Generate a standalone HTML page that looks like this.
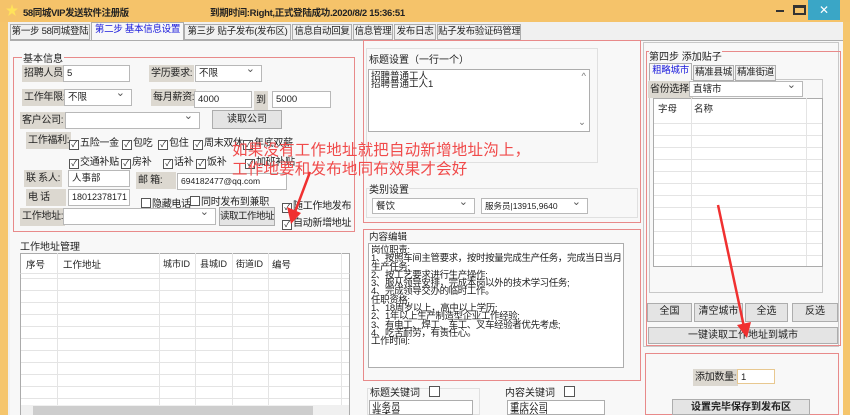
<!DOCTYPE html>
<html><head><meta charset="utf-8"><style>
*{box-sizing:border-box;margin:0;padding:0}
body{width:850px;height:415px;overflow:hidden;background:#f5c56c;font-family:"Liberation Sans","Noto Sans CJK SC",sans-serif;font-size:10px;color:#222;position:relative}
div,span{white-space:nowrap}
.a{position:absolute}
.red{position:absolute;border:1px solid #e88a8a}
.in{position:absolute;background:#fff;border:1px solid #b8b8b8;font-size:9.5px;padding:1px 3px;line-height:13px;overflow:hidden}
.lb{position:absolute;background:#dcd8d0;padding:0 2px;line-height:17px;height:17px;font-size:10px;letter-spacing:-0.3px}
.sel:after{content:"⌄";position:absolute;right:6px;top:-3px;font-size:11px;color:#555}
.btn{position:absolute;background:#e4e4e4;border:1px solid #adadad;text-align:center;line-height:16px;font-size:10px;overflow:hidden}
.cb{display:inline-block;width:10px;height:10px;border:1px solid #555;background:#fff;font-size:8px;line-height:8px;text-align:center;margin-right:1px;vertical-align:-1px}
.tab{position:absolute;top:24px;height:16px;border:1px solid #adadad;background:#f0f0f0;line-height:14px;font-size:9.5px;text-align:center;overflow:hidden;letter-spacing:-0.3px}
.grid{position:absolute;background:#fff;border:1px solid #ababab;background-image:linear-gradient(#e4e4e4 1px,transparent 1px);background-size:100% 12px}
.ta{position:absolute;background:#fff;border:1px solid #adadad;font-size:9.5px;line-height:8.3px;padding:3px 2px;overflow:hidden}
.ck{position:absolute;font-size:10px;letter-spacing:-0.3px}
</style></head><body>
<div class="a" style="left:0;top:0;width:850px;height:22px;background:#f5c36a"></div>
<div class="a" style="left:6px;top:4px;width:12px;height:12px;background:#ffe25a;clip-path:polygon(50% 0,62% 38%,100% 38%,70% 62%,82% 100%,50% 76%,18% 100%,30% 62%,0 38%,38% 38%)"></div>
<div class="a" style="left:23px;top:5px;font-weight:bold;font-size:9.5px;letter-spacing:-0.4px">58同城VIP发送软件注册版</div>
<div class="a" style="left:210px;top:5px;font-weight:bold;font-size:9.5px;letter-spacing:-0.3px">到期时间:Right,正式登陆成功.2020/8/2 15:36:51</div>
<div class="a" style="left:776px;top:10px;width:8px;height:2px;background:#333"></div>
<div class="a" style="left:793px;top:5px;width:13px;height:10px;border:2px solid #333;border-top-width:3px;background:#f5c36a"></div>
<div class="a" style="left:808px;top:0;width:32px;height:20px;background:#3aa6c6;color:#fff;text-align:center;line-height:20px;font-size:12px">✕</div>
<div class="a" style="left:8px;top:22px;width:835px;height:393px;background:#f0f0f0"></div>
<div class="tab" style="left:10px;width:80px">第一步 58同城登陆</div>
<div class="tab" style="left:91px;width:93px;top:22px;height:19px;background:#f8f8f8;border-bottom:none;color:#1a1adc">第二步 基本信息设置</div>
<div class="tab" style="left:184px;width:107px">第三步 贴子发布(发布区)</div>
<div class="tab" style="left:292px;width:60px">信息自动回复</div>
<div class="tab" style="left:353px;width:40px">信息管理</div>
<div class="tab" style="left:394px;width:42px">发布日志</div>
<div class="tab" style="left:437px;width:84px">贴子发布验证码管理</div>
<div class="a" style="left:10px;top:40px;width:833px;height:375px;border-top:1px solid #adadad;background:#f8f8f8"></div>
<!-- left group -->
<div class="red" style="left:13px;top:57px;width:342px;height:175px"></div>
<div class="a" style="left:22px;top:50px;background:#f8f8f8;padding:0 1px">基本信息</div>
<div class="lb" style="left:22px;top:65px">招聘人员:</div><div class="in" style="left:63px;top:65px;width:67px;height:17px">5</div>
<div class="lb" style="left:149px;top:65px">学历要求:</div><div class="in sel" style="left:195px;top:65px;width:67px;height:17px">不限</div>
<div class="lb" style="left:22px;top:89px">工作年限:</div><div class="in sel" style="left:64px;top:89px;width:68px;height:17px">不限</div>
<div class="lb" style="left:151px;top:89px">每月薪资:</div><div class="in" style="left:194px;top:91px;width:58px;height:17px">4000</div>
<div class="lb" style="left:254px;top:91px;height:20px;line-height:20px">到</div><div class="in" style="left:272px;top:91px;width:59px;height:17px">5000</div>
<div class="lb" style="left:20px;top:112px">客户公司:</div><div class="in sel" style="left:65px;top:112px;width:135px;height:17px"></div>
<div class="btn" style="left:212px;top:110px;width:70px;height:19px;line-height:17px">读取公司</div>
<div class="lb" style="left:26px;top:132px">工作福利:</div>
<div class="ck" style="left:69px;top:134px"><span class="cb">✓</span>五险一金</div>
<div class="ck" style="left:122px;top:134px"><span class="cb">✓</span>包吃</div>
<div class="ck" style="left:158px;top:134px"><span class="cb">✓</span>包住</div>
<div class="ck" style="left:193px;top:134px"><span class="cb">✓</span>周末双休</div>
<div class="ck" style="left:243px;top:134px"><span class="cb">✓</span>年底双薪</div>
<div class="ck" style="left:69px;top:153px"><span class="cb">✓</span>交通补贴</div>
<div class="ck" style="left:121px;top:153px"><span class="cb">✓</span>房补</div>
<div class="ck" style="left:163px;top:153px"><span class="cb">✓</span>话补</div>
<div class="ck" style="left:196px;top:153px"><span class="cb">✓</span>饭补</div>
<div class="ck" style="left:245px;top:153px"><span class="cb">✓</span>加班补贴</div>
<div class="lb" style="left:24px;top:170px">联 系人:</div><div class="in" style="left:68px;top:170px;width:62px;height:17px">人事部</div>
<div class="lb" style="left:136px;top:172px;width:40px">邮 箱:</div><div class="in" style="left:177px;top:173px;width:110px;height:17px;font-size:8.5px">694182477@qq.com</div>
<div class="lb" style="left:26px;top:189px;width:40px">电 话</div><div class="in" style="left:68px;top:189px;width:62px;height:17px;font-size:9px">18012378171</div>
<div class="ck" style="left:141px;top:195px"><span class="cb"></span>隐藏电话</div>
<div class="ck" style="left:190px;top:193px"><span class="cb"></span>同时发布到兼职</div>
<div class="ck" style="left:282px;top:197px"><span class="cb">✓</span>随工作地发布</div>
<div class="lb" style="left:20px;top:208px;height:18px">工作地址:</div><div class="in sel" style="left:63px;top:208px;width:153px;height:17px"></div>
<div class="btn" style="left:219px;top:207px;width:56px;height:19px;line-height:17px;font-size:9.5px;letter-spacing:-0.5px">读取工作地址</div>
<div class="ck" style="left:282px;top:214px"><span class="cb">✓</span>自动新增地址</div>
<!-- address grid -->
<div class="a" style="left:20px;top:238px">工作地址管理</div>
<div class="grid" style="left:20px;top:253px;width:330px;height:162px"></div>
<div class="a" style="left:20px;top:253px;width:330px;height:21px;background:#fff;border:1px solid #ababab;border-bottom:1px solid #e4e4e4"></div>
<div class="a" style="left:26px;top:257px;font-size:9.5px">序号</div><div class="a" style="left:63px;top:257px;font-size:9.5px">工作地址</div>
<div class="a" style="left:163px;top:257px;font-size:9px">城市ID</div><div class="a" style="left:200px;top:257px;font-size:9px">县城ID</div>
<div class="a" style="left:236px;top:257px;font-size:9px">街道ID</div><div class="a" style="left:272px;top:257px;font-size:9.5px">编号</div>
<div class="a" style="left:57px;top:253px;width:1px;height:152px;background:#e4e4e4"></div>
<div class="a" style="left:159px;top:253px;width:1px;height:152px;background:#e4e4e4"></div>
<div class="a" style="left:195px;top:253px;width:1px;height:152px;background:#e4e4e4"></div>
<div class="a" style="left:232px;top:253px;width:1px;height:152px;background:#e4e4e4"></div>
<div class="a" style="left:268px;top:253px;width:1px;height:152px;background:#e4e4e4"></div>
<div class="a" style="left:341px;top:253px;width:1px;height:152px;background:#e4e4e4"></div>
<div class="a" style="left:21px;top:405px;width:328px;height:10px;background:#f0f0f0"></div>
<div class="a" style="left:33px;top:406px;width:280px;height:9px;background:#cdcdcd"></div>
<!-- middle -->
<div class="red" style="left:363px;top:40px;width:278px;height:183px"></div>
<div class="a" style="left:366px;top:48px;width:232px;height:115px;border:1px solid #e0e0e0"></div>
<div class="a" style="left:369px;top:51px">标题设置（一行一个）</div>
<div class="ta" style="left:368px;top:69px;width:222px;height:63px">招聘普通工人<br>招聘普通工人1<span style="position:absolute;right:3px;top:2px;color:#777;line-height:10px">^</span><span style="position:absolute;right:3px;bottom:3px;color:#777;line-height:10px">⌄</span></div>
<div class="a" style="left:366px;top:188px;width:272px;height:30px;border:1px solid #e0e0e0"></div>
<div class="a" style="left:369px;top:181px;background:#f8f8f8">类别设置</div>
<div class="in sel" style="left:372px;top:198px;width:103px;height:16px">餐饮</div>
<div class="in sel" style="left:481px;top:198px;width:107px;height:16px;font-size:8.5px">服务员|13915,9640</div>
<div class="red" style="left:363px;top:229px;width:278px;height:152px"></div>
<div class="a" style="left:369px;top:229px;font-size:9.5px">内容编辑</div>
<div class="ta" style="left:368px;top:243px;width:256px;height:125px;letter-spacing:-0.4px">岗位职责:<br>1、按照车间主管要求，按时按量完成生产任务，完成当日当月<br>生产任务;<br>2、按工艺要求进行生产操作;<br>3、服从领导安排，完成本岗以外的技术学习任务;<br>4、完成领导交办的临时工作。<br>任职资格:<br>1、18周岁以上，高中以上学历;<br>2、1年以上生产制造型企业工作经验;<br>3、有电工、焊工、车工、叉车经验者优先考虑;<br>4、吃苦耐劳，有责任心。<br>工作时间:</div>
<div class="a" style="left:367px;top:388px;width:113px;height:27px;border:1px solid #e0e0e0"></div>
<div class="a" style="left:370px;top:384px">标题关键词 <span class="cb" style="width:11px;height:11px;margin-left:6px"></span></div>
<div class="ta" style="left:369px;top:400px;width:104px;height:15px">业务员<br>技术员</div>
<div class="a" style="left:505px;top:384px">内容关键词 <span class="cb" style="width:11px;height:11px;margin-left:6px"></span></div>
<div class="ta" style="left:507px;top:400px;width:98px;height:15px">重庆公司<br>贵阳公司</div>
<!-- right -->
<div class="a" style="left:643px;top:42px;width:196px;height:305px;border:1px solid #c8c8c8"></div>
<div class="red" style="left:646px;top:51px;width:195px;height:295px"></div>
<div class="a" style="left:649px;top:48px;background:#f8f8f8">第四步 添加贴子</div>
<div class="a" style="left:649px;top:79px;width:174px;height:214px;border:1px solid #c8c8c8"></div>
<div class="tab" style="left:649px;width:43px;top:63px;height:17px;background:#f8f8f8;border-bottom:none;color:#1a1adc">粗略城市</div>
<div class="tab" style="left:693px;width:41px;top:65px">精准县城</div>
<div class="tab" style="left:735px;width:41px;top:65px">精准街道</div>
<div class="lb" style="left:648px;top:81px">省份选择:</div>
<div class="in sel" style="left:689px;top:81px;width:114px;height:16px">直辖市</div>
<div class="grid" style="left:653px;top:98px;width:170px;height:169px"></div>
<div class="a" style="left:654px;top:99px;width:168px;height:16px;background:#fff"></div>
<div class="a" style="left:658px;top:101px;font-size:9.5px">字母</div><div class="a" style="left:694px;top:101px;font-size:9.5px">名称</div>
<div class="a" style="left:691px;top:98px;width:1px;height:168px;background:#e4e4e4"></div>
<div class="a" style="left:806px;top:98px;width:1px;height:168px;background:#e4e4e4"></div>
<div class="btn" style="left:647px;top:303px;width:45px;height:19px">全国</div>
<div class="btn" style="left:694px;top:303px;width:49px;height:19px">清空城市</div>
<div class="btn" style="left:745px;top:303px;width:43px;height:19px">全选</div>
<div class="btn" style="left:792px;top:303px;width:46px;height:19px">反选</div>
<div class="btn" style="left:648px;top:327px;width:190px;height:17px">一键读取工作地址到城市</div>
<div class="red" style="left:645px;top:353px;width:194px;height:62px"></div>
<div class="lb" style="left:693px;top:369px">添加数量:</div>
<div class="in" style="left:737px;top:369px;width:38px;height:15px;border-color:#e8c890">1</div>
<div class="btn" style="left:672px;top:399px;width:138px;height:16px;font-weight:bold">设置完毕保存到发布区</div>
<!-- annotations -->
<div class="a" style="left:232px;top:141px;color:#f04a4a;font-size:15.5px;line-height:19px;letter-spacing:0.2px">如果没有工作地址就把自动新增地址沟上，<br>工作地要和发布地同布效果才会好</div>
<svg class="a" style="left:0;top:0" width="850" height="415">
<path d="M310 172 L295 212" stroke="#f03030" stroke-width="2.5"/>
<polygon points="287,207 301,213 291,224" fill="#f03030"/>
<path d="M718 205 L744 327" stroke="#f03030" stroke-width="2.5"/>
<polygon points="737,325 751,322 747,338" fill="#f03030"/>
</svg>
</body></html>
